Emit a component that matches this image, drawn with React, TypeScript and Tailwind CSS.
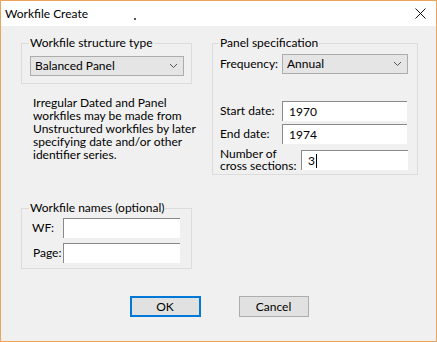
import React from "react";

const font = { fontFamily: 'Lato, "Noto Sans", Arial, sans-serif' };

function Chevron() {
  return (
    <svg width="9" height="6" viewBox="0 0 9 6" className="shrink-0">
      <path d="M1 1 L4.5 4.5 L8 1" fill="none" stroke="#555" strokeWidth="1" />
    </svg>
  );
}

function Dropdown({ value, w }: { value: string; w: string }) {
  return (
    <div className={`${w} h-[20px] bg-[#e5e5e5] border border-[#acacac] flex items-center justify-between pl-[4px] pr-[5px]`}>
      <span className="leading-[16px] whitespace-nowrap">{value}</span>
      <Chevron />
    </div>
  );
}

function Input({ w, value, cursor }: { w: string; value?: string; cursor?: boolean }) {
  return (
    <div className={`${w} h-[20px] shrink-0 bg-white border-t border-l border-[#8a8a8a] flex items-center pl-[6px]`}>
      <span className="leading-[16px]">{value}</span>
      {cursor && <span className="w-[1px] h-[14px] bg-black ml-[1px]" />}
    </div>
  );
}

function GroupLabel({ text, ml }: { text: string; ml: string }) {
  return (
    <div className={`-mt-[9px] ${ml} w-fit bg-[#f0f0f0] px-[1px] leading-[16px] h-[16px] whitespace-nowrap`}>{text}</div>
  );
}

export default function App() {
  return (
    <div
      className="w-[437px] h-[342px] border border-[#e8a55b] flex flex-col text-[12px] text-black overflow-hidden whitespace-nowrap"
      style={font}
    >
      <div className="h-[25px] bg-white flex items-center justify-between pl-[4px] pr-[10px] relative shrink-0">
        <span className="leading-[16px]">Workfile Create</span>
        <span className="absolute left-[133px] top-[17px] w-[2px] h-[2px] bg-[#555]" />
        <svg width="11" height="11" viewBox="0 0 11 11">
          <path d="M0.5 0.5 L10.5 10.5 M10.5 0.5 L0.5 10.5" stroke="#111" strokeWidth="1" />
        </svg>
      </div>
      <div className="flex-1 bg-[#f0f0f0] flex flex-col">
        <div className="flex pl-[20px] gap-[20px]">
          {/* Left column */}
          <div className="w-[171px] flex flex-col">
            <div className="mt-[17px] border border-[#dcdcdc] pb-[7px]">
              <GroupLabel text="Workfile structure type" ml="ml-[7px]" />
              <div className="mt-[5px] ml-[8px]">
                <Dropdown value="Balanced Panel" w="w-[154px]" />
              </div>
            </div>
            <div className="mt-[12px] ml-[12px] leading-[13px]">
              Irregular Dated and Panel
              <br />
              workfiles may be made from
              <br />
              Unstructured workfiles by later
              <br />
              specifying date and/or other
              <br />
              identifier series.
            </div>
            <div className="mt-[47px] border border-[#dcdcdc] pb-[5px]">
              <GroupLabel text="Workfile names (optional)" ml="ml-[7px]" />
              <div className="mt-[2px] ml-[10px] flex items-center">
                <span className="w-[31px] leading-[16px]">WF:</span>
                <Input w="w-[117px]" />
              </div>
              <div className="mt-[5px] ml-[10px] flex items-center">
                <span className="w-[31px] pl-[1px] leading-[16px]">Page:</span>
                <Input w="w-[117px]" />
              </div>
            </div>
          </div>
          {/* Right column */}
          <div className="w-[206px] flex flex-col">
            <div className="mt-[17px] border border-[#dcdcdc] pb-[2px]">
              <GroupLabel text="Panel specification" ml="ml-[6px]" />
              <div className="mt-[3px] ml-[7px] flex items-center">
                <span className="w-[62px] leading-[16px]">Frequency:</span>
                <Dropdown value="Annual" w="w-[126px]" />
              </div>
              <div className="mt-[27px] ml-[7px] flex items-center">
                <span className="w-[62px] leading-[16px]">Start date:</span>
                <Input w="w-[125px]" value="1970" />
              </div>
              <div className="mt-[3px] ml-[7px] flex items-center">
                <span className="w-[62px] leading-[16px]">End date:</span>
                <Input w="w-[125px]" value="1974" />
              </div>
              <div className="mt-[4px] ml-[7px] flex items-center h-[24px]">
                <span className="w-[81px] leading-[12px]">
                  Number of
                  <br />
                  cross sections:
                </span>
                <Input w="w-[107px]" value="3" cursor />
              </div>
            </div>
          </div>
        </div>
        <div className="mt-[27px] flex justify-center gap-[38px] pl-[1px]">
          <div className="w-[71px] h-[21px] border-2 border-[#0078d7] bg-[#e1e1e1] flex items-center justify-center leading-[16px]">
            OK
          </div>
          <div className="w-[70px] h-[21px] border border-[#adadad] bg-[#e1e1e1] flex items-center justify-center leading-[16px]">
            Cancel
          </div>
        </div>
      </div>
    </div>
  );
}
